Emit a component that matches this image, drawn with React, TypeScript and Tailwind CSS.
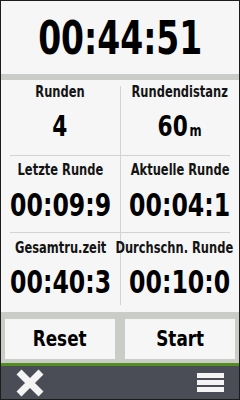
const font = { fontFamily: '"DejaVu Sans Condensed", "DejaVu Sans", sans-serif' };

function Label({ text, extra = "" }: { text: string; extra?: string }) {
  return (
    <div className={`flex justify-center h-[15px] ${extra}`}>
      <span className="inline-block shrink-0 whitespace-nowrap text-[15px] leading-none font-bold text-[#141414] scale-x-[0.85]">
        {text}
      </span>
    </div>
  );
}

function Value({ text, unit, size }: { text: string; unit?: string; size: "sm" | "lg" }) {
  return (
    <div className={`flex justify-center ${size === "lg" ? "h-[32px]" : "h-[28px]"}`}>
      <span
        className={`inline-block shrink-0 whitespace-nowrap leading-none font-bold text-black ${
          size === "lg" ? "text-[32px] scale-x-[0.82]" : "text-[28px] scale-x-[0.86]"
        }`}
      >
        {text}
        {unit && <span className="text-[15px] ml-[2px]">{unit}</span>}
      </span>
    </div>
  );
}

function Cell({
  label,
  value,
  unit,
  size,
  pt,
  gap,
  labelExtra,
}: {
  label: string;
  value: string;
  unit?: string;
  size: "sm" | "lg";
  pt: string;
  gap: string;
  labelExtra?: string;
}) {
  return (
    <div className={`flex-1 basis-0 min-w-0 flex flex-col ${pt}`}>
      <Label text={label} extra={labelExtra} />
      <div className={gap} />
      <Value text={value} unit={unit} size={size} />
    </div>
  );
}

export default function App() {
  return (
    <div style={font} className="w-[240px] h-[400px] border border-[#1c1c1c] bg-[#f6f6f6] flex flex-col overflow-hidden">
      {/* top timer */}
      <div className="h-[73px] flex items-center justify-center">
        <span className="inline-block text-[47px] leading-none font-bold text-black scale-x-[0.78] whitespace-nowrap">
          00:44:51
        </span>
      </div>
      <div className="h-[6px] bg-[#c9ccc7]" />

      {/* grid */}
      <div className="flex flex-col">
        <div className="h-[75px] flex">
          <Cell label="Runden" value="4" size="sm" pt="pt-[5px]" gap="h-[13px]" />
          <div className="w-px mt-[6px] bg-[#d3d3d3]" />
          <Cell label="Rundendistanz" value="60" unit="m" size="sm" pt="pt-[5px]" gap="h-[13px]" />
        </div>
        <div className="h-px mx-[9px] bg-[#d3d3d3]" />
        <div className="h-[76px] flex">
          <Cell label="Letzte Runde" value="00:09:9" size="lg" pt="pt-[7px]" gap="h-[11px]" />
          <div className="w-px bg-[#d3d3d3]" />
          <Cell label="Aktuelle Runde" value="00:04:1" size="lg" pt="pt-[7px]" gap="h-[11px]" />
        </div>
        <div className="h-px mx-[9px] bg-[#d3d3d3]" />
        <div className="h-[79px] flex">
          <Cell label="Gesamtru.zeit" value="00:40:3" size="lg" pt="pt-[8px]" gap="h-[10px]" />
          <div className="w-px mb-[7px] bg-[#d3d3d3]" />
          <Cell
            label="Durchschn. Runde"
            value="00:10:0"
            size="lg"
            pt="pt-[8px]"
            gap="h-[10px]"
            labelExtra="-translate-x-[5px]"
          />
        </div>
      </div>

      {/* buttons */}
      <div className="bg-[#c9ccc7] pt-[7px] pb-[4px] pl-[4px] pr-[3px] flex gap-[10px]">
        <div className="w-[110px] h-[40px] bg-[#f6f6f6] flex items-center justify-center">
          <span className="inline-block text-[22px] leading-none font-bold text-black scale-x-[0.85]">Reset</span>
        </div>
        <div className="w-[110px] h-[40px] bg-[#f6f6f6] flex items-center justify-center">
          <span className="inline-block text-[22px] leading-none font-bold text-black scale-x-[0.85]">Start</span>
        </div>
      </div>
      <div className="h-[3px] bg-[#53901f]" />

      {/* bottom bar */}
      <div className="flex-1 bg-[#4a4d56] flex items-center justify-between pl-[15px] pr-[15px]">
        <svg width="28" height="28" viewBox="0 0 28 28" className="mt-[1px]">
          <path d="M3 3 L25 25 M25 3 L3 25" stroke="#f4f4f4" strokeWidth="7" strokeLinecap="butt" />
        </svg>
        <div className="flex flex-col gap-[2px] w-[27px]">
          <div className="h-[5px] bg-[#f4f4f4]" />
          <div className="h-[5px] bg-[#f4f4f4]" />
          <div className="h-[5px] bg-[#f4f4f4]" />
        </div>
      </div>
    </div>
  );
}
